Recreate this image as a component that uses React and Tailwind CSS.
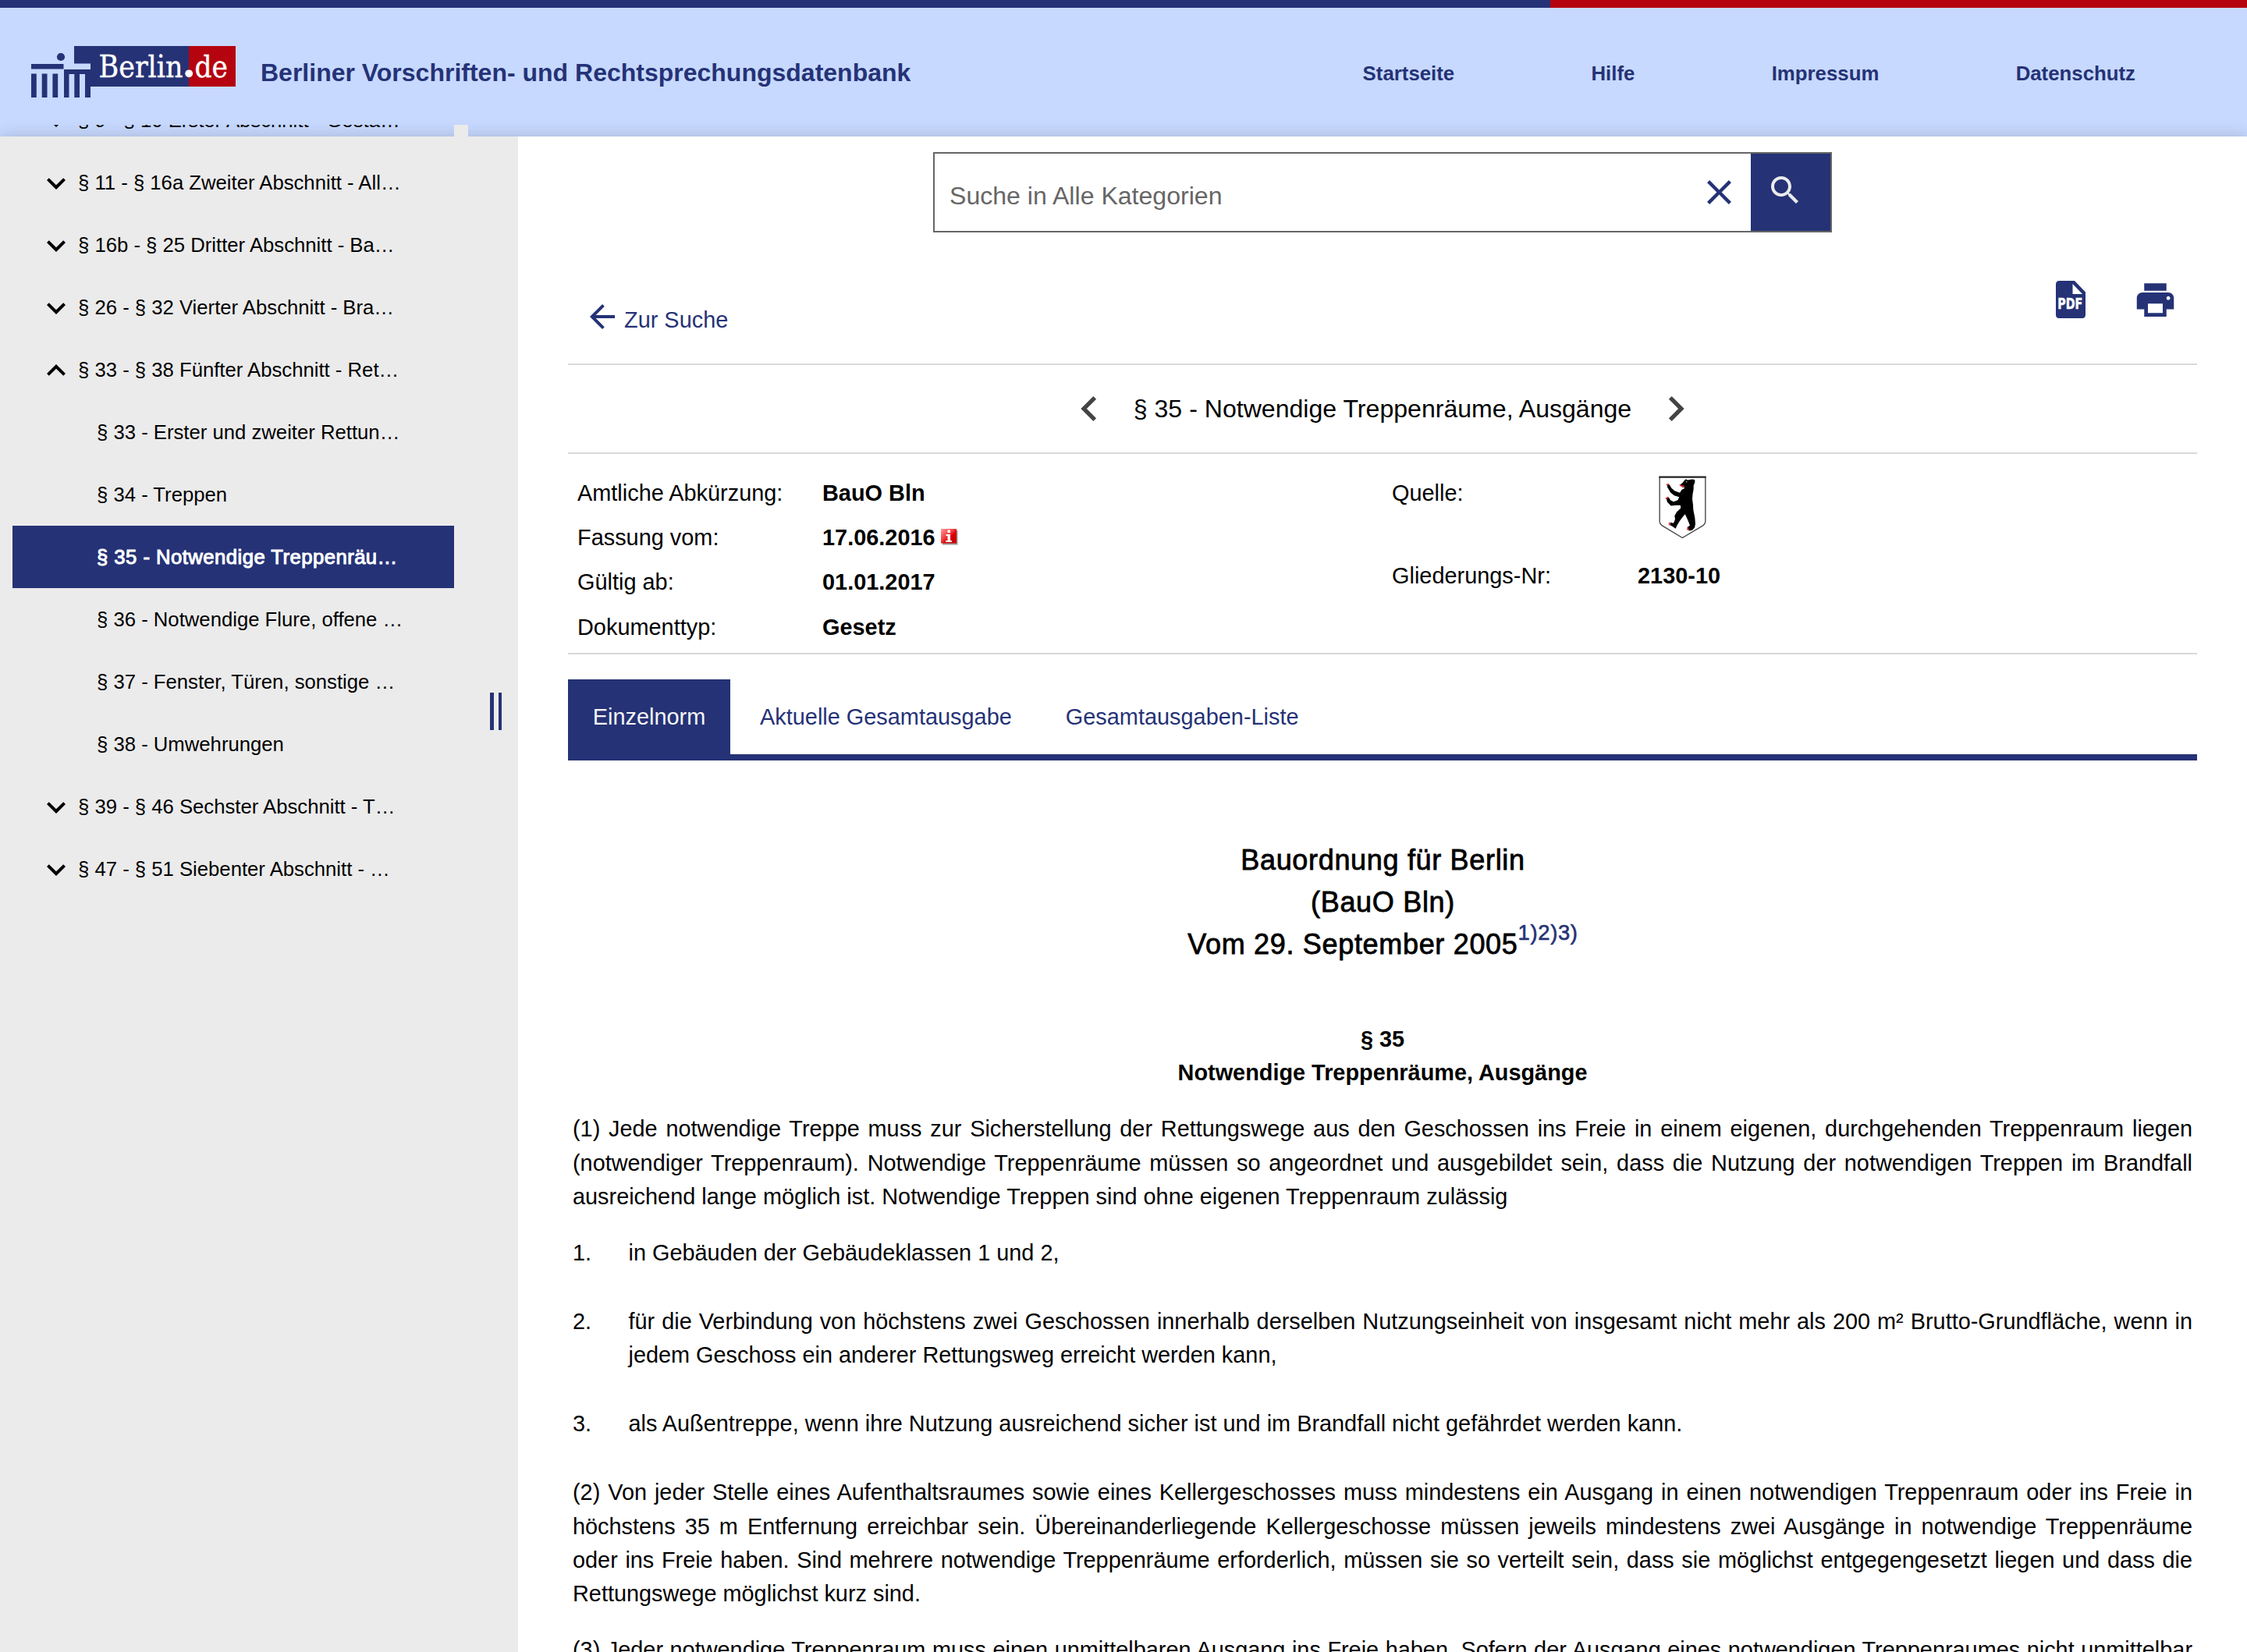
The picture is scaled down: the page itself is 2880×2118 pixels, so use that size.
const NAVY = "#253276";

const MoreIcon = ({ open }) => (
  <svg viewBox="0 0 24 24" className="mt-[2px] mr-[4px] h-[48px] w-[48px] shrink-0">
    <path
      fill="#000"
      d={
        open
          ? "M12 8l-6 6 1.41 1.41L12 10.83l4.59 4.58L18 14z"
          : "M16.59 8.59L12 13.17 7.41 8.59 6 10l6 6 6-6z"
      }
    />
  </svg>
);

const Logo = () => (
  <svg viewBox="40 59 262 66" className="mt-[49px] ml-[40px] h-[66px] w-[262px] shrink-0 font-normal">
    <path
      fill={NAVY}
      d="M95 59H243V111H116V125H109V95H102V125H95.3V95H88.5V125H82V89H116V81.5H95Z"
    />
    <path fill="#b5040f" d="M242 59H302V111H242Z" />
    <path fill={NAVY} d="M40 82H81.5V88.5H40ZM40 94.5H46.8V125H40ZM53.7 94.5H60.5V125H53.7ZM67.4 94.5H74.2V125H67.4Z" />
    <circle cx="78" cy="73" r="5.1" fill={NAVY} />
    <text x="126.5" y="98.5" fontSize="38.5" textLength="108" lengthAdjust="spacingAndGlyphs" fill="#fff" stroke="#fff" strokeWidth="0.4" fontFamily="'DejaVu Serif', serif">
      Berlin
    </text>
    <circle cx="242.2" cy="94.3" r="4.9" fill="#fff" />
    <text x="249.5" y="98.5" fontSize="38.5" textLength="42.5" lengthAdjust="spacingAndGlyphs" fill="#fff" stroke="#fff" strokeWidth="0.4" fontFamily="'DejaVu Serif', serif">
      de
    </text>
  </svg>
);

const Shield = () => (
  <svg viewBox="47 29 183 242" className="h-[81px] w-[61px]">
    <path d="M50.500 32V205Q51 214 60 220L138 267L217 220Q226 214 226.500 205V32" fill="#fff" stroke="#444" strokeWidth="4" />
    <path d="M48 30H229V37H48Z" fill="#222" />
    <path
      fill="#000"
      d="M146 46L152 41L158 45L170 43L178 42L186 44L186 54L181 66L181 80L178 96L176 118L179 140L180 160L186 190L188 214L185 228L176 238L163 240L158 226L167 220L160 202L152 184L148 176L138 188L128 202L118 218L112 232L98 222L90 218L92 208L104 211L110 196L108 182L116 168L132 152L130 142L114 142L94 144L80 130L76 114L86 112L92 122L104 128L120 122L126 110L106 104L92 92L80 72L80 62L88 62L96 76L108 86L128 94L136 82L148 76L138 72L128 64L138 56Z"
    />
    <path
      d="M76 64L86 60M74 117L84 110M88 208L88 219M158 226L158 238M128 62L134 68L146 70"
      stroke="#e8303c"
      strokeWidth="5"
      fill="none"
    />
    <circle cx="154" cy="52" r="2.500" fill="#bbb" />
  </svg>
);

const TREE = [
  { t: "§ 9 - § 10 Erster Abschnitt - Gesta…" },
  { t: "§ 11 - § 16a Zweiter Abschnitt - All…" },
  { t: "§ 16b - § 25 Dritter Abschnitt - Ba…" },
  { t: "§ 26 - § 32 Vierter Abschnitt - Bra…" },
  { t: "§ 33 - § 38 Fünfter Abschnitt - Ret…", open: true },
  { t: "§ 33 - Erster und zweiter Rettun…", leaf: true },
  { t: "§ 34 - Treppen", leaf: true },
  { t: "§ 35 - Notwendige Treppenräu…", leaf: true, active: true },
  { t: "§ 36 - Notwendige Flure, offene …", leaf: true },
  { t: "§ 37 - Fenster, Türen, sonstige …", leaf: true },
  { t: "§ 38 - Umwehrungen", leaf: true },
  { t: "§ 39 - § 46 Sechster Abschnitt - T…" },
  { t: "§ 47 - § 51 Siebenter Abschnitt - …" },
];

const Sidebar = () => (
  <aside className="flex w-[664px] shrink-0 bg-[#ebebeb]">
    <div className="-mt-[15px] w-[600px] shrink-0 overflow-hidden pl-[16px]">
      <div className="flex">
        <ul className="-mt-[46px] w-[566px] text-[25.7px] leading-[40px]">
          {TREE.map((n) => (
            <li
              key={n.t}
              className={
                "flex h-[80px] items-center whitespace-nowrap " +
                (n.leaf ? "pl-[108px] " : "pl-[32px] ") +
                (n.active
                  ? "bg-[#253276] tracking-[0.45px] text-white [-webkit-text-stroke:1px_white]"
                  : "text-black")
              }
            >
              {!n.leaf && <MoreIcon open={n.open} />}
              <span>{n.t}</span>
            </li>
          ))}
        </ul>
        <div className="h-[60px] w-[18px] bg-[#ebebeb]" />
      </div>
    </div>
    <div className="mt-[713px] ml-[28px] flex h-[48px] gap-[6px]">
      <div className="w-[4.6px] bg-[#253276]" />
      <div className="w-[4.6px] bg-[#253276]" />
    </div>
  </aside>
);

const Header = () => (
  <header className="h-[175px] bg-[#c7d9ff] text-[#253276]">
    <div className="flex h-[10px]">
      <div className="w-[1987px] bg-[#253276]" />
      <div className="flex-1 bg-[#b5040f]" />
    </div>
    <div className="flex items-start font-bold whitespace-nowrap">
      <Logo />
      <h1 className="mt-[59px] ml-[32px] text-[32px] leading-[48px]">
        Berliner Vorschriften- und Rechtsprechungsdatenbank
      </h1>
      <nav className="mt-[64px] mr-[143px] ml-auto flex gap-[175.300px] text-[25.8px] leading-[40px]">
        <a>Startseite</a>
        <a>Hilfe</a>
        <a>Impressum</a>
        <a>Datenschutz</a>
      </nav>
    </div>
  </header>
);

const SearchBar = () => (
  <div className="mx-auto flex h-[103px] w-[1152px] border-2 border-[#666]">
    <span className="mt-[30px] ml-[19px] text-[32.1px] leading-[48px] text-[#666]">Suche in Alle Kategorien</span>
    <svg viewBox="0 0 24 24" className="mt-[23px] mr-[14px] ml-auto h-[53px] w-[53px]">
      <path fill={NAVY} d="M19 6.410L17.590 5 12 10.590 6.410 5 5 6.410 10.590 12 5 17.590 6.410 19 12 13.410 17.590 19 19 17.590 13.410 12z" />
    </svg>
    <button className="flex w-[102px] items-start bg-[#253276] pt-[23px] pl-[20px]">
      <svg viewBox="0 0 24 24" className="h-[48px] w-[48px]">
        <path
          fill="#ebebeb"
          d="M15.5 14h-.79l-.28-.27C15.410 12.590 16 11.110 16 9.500 16 5.910 13.090 3 9.500 3S3 5.910 3 9.500 5.910 16 9.500 16c1.610 0 3.090-.59 4.230-1.570l.27.28v.79l5 4.990L20.490 19l-4.990-5zm-6 0C7.010 14 5 11.990 5 9.500S7.010 5 9.500 5 14 7.010 14 9.500 11.990 14 9.500 14z"
        />
      </svg>
    </button>
  </div>
);

const Toolbar = () => (
  <div className="flex h-[170px] items-start border-b-2 border-[#d9d9d9] text-[#253276]">
    <a className="mt-[84px] ml-[20px] flex">
      <svg viewBox="0 0 24 24" className="mr-[4px] h-[48px] w-[48px]">
        <path fill={NAVY} d="M20 11H7.830l5.590-5.590L12 4l-8 8 8 8 1.410-1.410L7.830 13H20v-2z" />
      </svg>
      <span className="mt-[7px] text-[28.9px] leading-[42px]">Zur Suche</span>
    </a>
    <svg viewBox="0 0 38 48" className="mt-[62px] ml-auto h-[48px] w-[38px]">
      <path
        fill={NAVY}
        fillRule="evenodd"
        d="M4.500 0H24L38 14.500V43.500Q38 48 33.500 48H4.500Q0 48 0 43.500V4.500Q0 0 4.500 0ZM21.500 4V17H34Z"
      />
      <text x="2.200" y="36" fontSize="19" fontWeight="bold" textLength="32" lengthAdjust="spacingAndGlyphs" fill="#fff" stroke="#fff" strokeWidth="0.5" fontFamily="'DejaVu Sans', sans-serif">
        PDF
      </text>
    </svg>
    <svg viewBox="0 0 24 24" className="mt-[58px] mr-[25px] ml-[61px] h-[57px] w-[57px]">
      <path
        fill={NAVY}
        d="M19 8H5c-1.660 0-3 1.340-3 3v6h4v4h12v-4h4v-6c0-1.660-1.340-3-3-3zm-3 11H8v-5h8v5zm3-7c-.55 0-1-.45-1-1s.45-1 1-1 1 .45 1 1-.45 1-1 1zm-1-9H6v4h12V3z"
      />
    </svg>
  </div>
);

const DocNav = () => (
  <div className="flex h-[114px] items-center justify-center gap-[25px] border-b-2 border-[#d9d9d9]">
    <svg viewBox="0 0 24 24" className="h-[64px] w-[64px]">
      <path fill="#444" d="M15.410 7.410L14 6l-6 6 6 6 1.410-1.410L10.830 12z" />
    </svg>
    <span className="text-[32.1px] leading-[48px]">§ 35 - Notwendige Treppenräume, Ausgänge</span>
    <svg viewBox="0 0 24 24" className="h-[64px] w-[64px]">
      <path fill="#444" d="M10 6L8.590 7.410 13.170 12l-4.580 4.590L10 18l6-6z" />
    </svg>
  </div>
);

const InfoIcon = () => (
  <svg viewBox="0 0 22 21" className="ml-[7px] h-[21px] w-[22px]">
    <defs>
      <linearGradient id="info" x1="0" y1="0" x2="1" y2="1">
        <stop offset="0" stopColor="#ff9a9a" />
        <stop offset="0.450" stopColor="#f03a3a" />
        <stop offset="0.600" stopColor="#d80000" />
        <stop offset="1" stopColor="#c40000" />
      </linearGradient>
    </defs>
    <path d="M2 2H21.500V20.500H2Z" fill="#9a9a9a" />
    <path d="M0 0H20V18.500H0Z" fill="url(#info)" />
    <path d="M8.500 1.500H12V5H8.500ZM6.500 7H12V15H14V17H6V15H8.500V9H6.500Z" fill="#fff" />
  </svg>
);

const META = [
  ["Amtliche Abkürzung:", "BauO Bln"],
  ["Fassung vom:", "17.06.2016"],
  ["Gültig ab:", "01.01.2017"],
  ["Dokumenttyp:", "Gesetz"],
];

const Meta = () => (
  <div className="flex h-[257px] border-b-2 border-[#d9d9d9] pl-[12px] text-[28.9px]">
    <dl className="w-[1044px] pt-[21px]">
      {META.map(([k, v]) => (
        <div key={k} className="flex h-[57.3px] items-center leading-[42px]">
          <dt className="w-[314px]">{k}</dt>
          <dd className="flex items-center font-bold">
            {v}
            {k === "Fassung vom:" && <InfoIcon />}
          </dd>
        </div>
      ))}
    </dl>
    <dl className="pt-[28px] leading-[42px]">
      <div className="flex h-[106px]">
        <dt className="w-[342px] pt-px">Quelle:</dt>
        <dd>
          <Shield />
        </dd>
      </div>
      <div className="flex pt-px">
        <dt className="w-[315px]">Gliederungs-Nr:</dt>
        <dd className="font-bold">2130-10</dd>
      </div>
    </dl>
  </div>
);

const Tabs = () => (
  <div className="mt-[32px] flex h-[104px] border-b-8 border-[#253276] text-[28.900px] leading-[96px] text-[#253276]">
    <a className="w-[208px] bg-[#253276] text-center text-[#f5f5f5]">Einzelnorm</a>
    <a className="ml-[38px]">Aktuelle Gesamtausgabe</a>
    <a className="ml-[69px]">Gesamtausgaben-Liste</a>
  </div>
);

const Item = ({ n, children }) => (
  <li className="mb-[44.400px] flex">
    <span className="w-[71.500px] shrink-0">{n}</span>
    <p className="flex-1 text-justify">{children}</p>
  </li>
);

const Document = () => (
  <article className="pr-[6px] pl-[6px] text-[28.87px] leading-[43.47px]">
    <h2 className="mt-[101px] pl-px text-center text-[36px] leading-[54px] tracking-[0.68px] [-webkit-text-stroke:0.8px_black]">
      Bauordnung für Berlin
      <br />
      (BauO Bln)
      <br />
      Vom 29. September 2005
      <sup className="top-[-18px] align-baseline text-[27.4px] leading-none text-[#253276] [-webkit-text-stroke:0.6px_#253276]">1)2)3)</sup>
    </h2>
    <h3 className="mt-[73px] text-center font-bold">
      § 35
      <br />
      Notwendige Treppenräume, Ausgänge
    </h3>
    <p className="mt-[28.200px] text-justify">
      (1) Jede notwendige Treppe muss zur Sicherstellung der Rettungswege aus den Geschossen ins Freie in einem
      eigenen, durchgehenden Treppenraum liegen (notwendiger Treppenraum). Notwendige Treppenräume müssen so
      angeordnet und ausgebildet sein, dass die Nutzung der notwendigen Treppen im Brandfall ausreichend lange
      möglich ist. Notwendige Treppen sind ohne eigenen Treppenraum zulässig
    </p>
    <ol className="mt-[28.500px]">
      <Item n="1.">in Gebäuden der Gebäudeklassen 1 und 2,</Item>
      <Item n="2.">
        für die Verbindung von höchstens zwei Geschossen innerhalb derselben Nutzungseinheit von insgesamt nicht
        mehr als 200 m² Brutto-Grundfläche, wenn in jedem Geschoss ein anderer Rettungsweg erreicht werden kann,
      </Item>
      <Item n="3.">
        als Außentreppe, wenn ihre Nutzung ausreichend sicher ist und im Brandfall nicht gefährdet werden kann.
      </Item>
    </ol>
    <p className="text-justify">
      (2) Von jeder Stelle eines Aufenthaltsraumes sowie eines Kellergeschosses muss mindestens ein Ausgang in einen
      notwendigen Treppenraum oder ins Freie in höchstens 35 m Entfernung erreichbar sein. Übereinanderliegende
      Kellergeschosse müssen jeweils mindestens zwei Ausgänge in notwendige Treppenräume oder ins Freie haben. Sind
      mehrere notwendige Treppenräume erforderlich, müssen sie so verteilt sein, dass sie möglichst entgegengesetzt
      liegen und dass die Rettungswege möglichst kurz sind.
    </p>
    <p className="mt-[28.500px] text-justify">
      (3) Jeder notwendige Treppenraum muss einen unmittelbaren Ausgang ins Freie haben. Sofern der Ausgang eines
      notwendigen Treppenraumes nicht unmittelbar ins Freie führt, muss der Raum zwischen dem notwendigen Treppenraum
      und dem Ausgang ins Freie
    </p>
  </article>
);

export default function App() {
  return (
    <div className="flex h-[2118px] w-[2880px] flex-col overflow-hidden bg-white font-['Liberation_Sans',Arial,sans-serif] text-black">
      <Header />
      <div className="flex h-[1943px] shadow-[0_0_20px_rgba(0,0,0,0.18)]">
        <Sidebar />
        <main className="h-[1943px] w-[2216px] overflow-hidden bg-white px-[64px] pt-[20px]">
          <SearchBar />
          <Toolbar />
          <DocNav />
          <Meta />
          <Tabs />
          <Document />
        </main>
      </div>
    </div>
  );
}
